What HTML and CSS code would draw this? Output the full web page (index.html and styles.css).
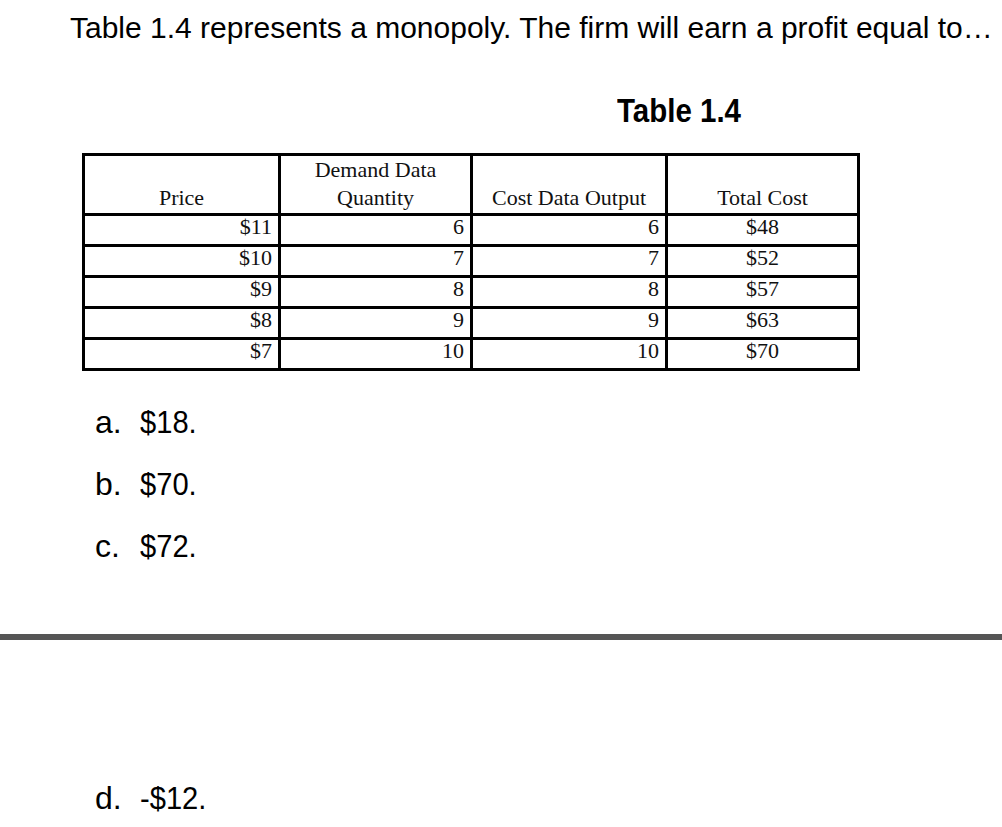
FILE: index.html
```html
<!DOCTYPE html>
<html>
<head>
<meta charset="utf-8">
<link rel="stylesheet" href="styles.css">
</head>
<body>
<p class="question">Table 1.4 represents a monopoly. The firm will earn a profit equal to…</p>
<p class="caption"><span class="caption-text">Table 1.4</span></p>
<table class="data">
  <colgroup>
    <col class="c1"><col class="c2"><col class="c3"><col class="c4">
  </colgroup>
  <thead>
    <tr>
      <th>Price</th>
      <th>Demand Data<br>Quantity</th>
      <th>Cost Data Output</th>
      <th>Total Cost</th>
    </tr>
  </thead>
  <tbody>
    <tr><td>$11</td><td>6</td><td>6</td><td class="mid">$48</td></tr>
    <tr><td>$10</td><td>7</td><td>7</td><td class="mid">$52</td></tr>
    <tr><td>$9</td><td>8</td><td>8</td><td class="mid">$57</td></tr>
    <tr><td>$8</td><td>9</td><td>9</td><td class="mid">$63</td></tr>
    <tr><td>$7</td><td>10</td><td>10</td><td class="mid">$70</td></tr>
  </tbody>
</table>
<ul class="options">
  <li><span class="letter">a.</span><span class="value">$18.</span></li>
  <li><span class="letter">b.</span><span class="value">$70.</span></li>
  <li><span class="letter">c.</span><span class="value">$72.</span></li>
</ul>
<div class="divider"></div>
<ul class="options last">
  <li><span class="letter">d.</span><span class="value">-$12.</span></li>
</ul>
</body>
</html>
```
FILE: styles.css
```css
html, body {
  margin: 0;
  padding: 0;
  background: #fff;
  color: #000;
}
body {
  font-family: "Liberation Sans", Arial, sans-serif;
  width: 1002px;
  height: 827px;
  overflow: hidden;
}
.question {
  margin: 0;
  padding: 13px 0 0 70px;
  font-size: 30px;
  line-height: 30px;
  white-space: nowrap;
}
.caption {
  margin: 50px 0 0 617px;
  font-size: 34px;
  line-height: 34px;
  font-weight: bold;
}
.caption-text {
  display: inline-block;
  transform: scaleX(0.867);
  transform-origin: left center;
}
.data {
  margin: 26px 0 0 82px;
  border-collapse: collapse;
  table-layout: fixed;
  width: 775px;
  font-family: "Liberation Serif", "Times New Roman", serif;
  font-size: 22px;
  color: #111;
}
.c1 { width: 196px; }
.c2 { width: 192px; }
.c3 { width: 195px; }
.c4 { width: 192px; }
.data th, .data td {
  border: 3px solid #000;
  padding: 0;
}
.data th {
  font-weight: normal;
  line-height: 28px;
  height: 53px;
  vertical-align: bottom;
  padding-bottom: 1px;
  text-align: center;
}
.data td {
  line-height: 22px;
  padding: 0 6px 6px 6px;
  text-align: right;
}
.data td.mid {
  text-align: center;
}
.options {
  list-style: none;
  margin: 20px 0 0 95px;
  padding: 0;
  font-size: 32px;
  line-height: 62px;
}
.options li {
  display: flex;
}
.letter {
  width: 45px;
}
.value {
  display: inline-block;
  transform: scaleX(0.91);
  transform-origin: left center;
}
.divider {
  margin-top: 57px;
  height: 6px;
  background: #555;
}
.options.last {
  margin-top: 127px;
}
```
